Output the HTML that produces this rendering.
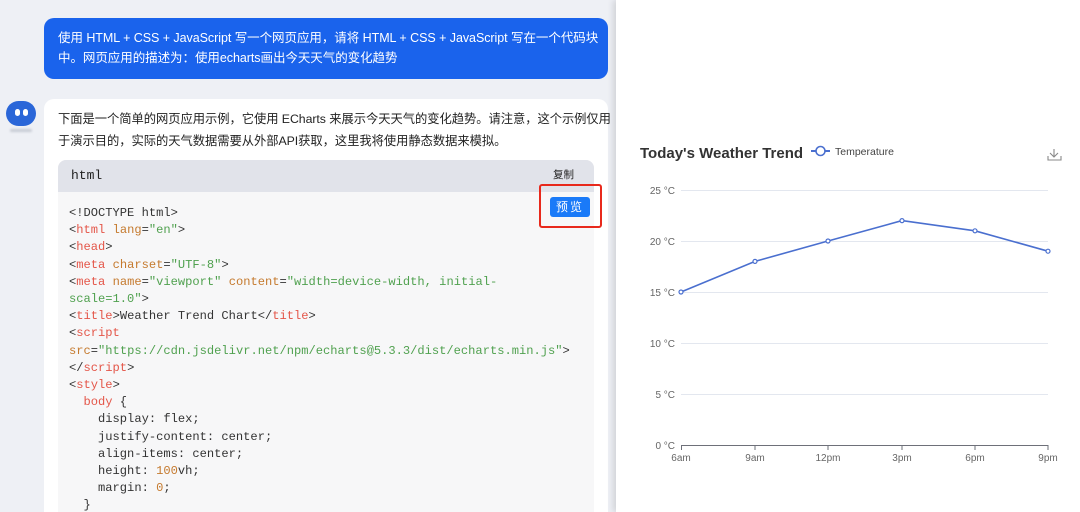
<!DOCTYPE html>
<html style="width:1080px;height:512px;overflow:hidden"><head><meta charset="utf-8"><style>
*{margin:0;padding:0;box-sizing:border-box}
body{width:1080px;height:512px;overflow:hidden;background:#eef0f5;font-family:"Liberation Sans","Noto Sans CJK SC",sans-serif;position:relative}
.q{position:absolute;left:44px;top:18px;width:564px;height:61px;background:#1a63ec;border-radius:10px;color:#fff;font-size:12.5px;line-height:20px;padding:10px 0 10px 14px;letter-spacing:-0.05px}
.av{position:absolute;left:6px;top:101px;width:30px;height:25px;border-radius:13px;background:#2a66d8}
.av i{position:absolute;top:8px;width:5px;height:7px;background:#fff;border-radius:3px}
.sh{position:absolute;left:10px;top:129px;width:22px;height:3px;background:#c8ccd4;border-radius:2px;filter:blur(1px)}
.a{position:absolute;left:44px;top:99px;width:564px;height:413px;background:#fff;border-radius:10px 10px 0 0}
.t{position:absolute;left:58px;top:108px;width:560px;font-size:12.3px;line-height:22px;color:#222;letter-spacing:-0.05px}
.cb{position:absolute;left:58px;top:160px;width:536px;height:352px;background:#f7f7f8;border-radius:8px 8px 0 0;overflow:hidden}
.ch{height:32px;background:#e1e3ea;font-family:"Liberation Mono",monospace;font-size:13px;line-height:32px;padding-left:13px;color:#222}
.cp{position:absolute;right:20px;top:8px;font-size:10.5px;color:#222;font-family:"Liberation Sans","Noto Sans CJK SC",sans-serif;line-height:14px}
pre{position:absolute;left:11px;top:45px;font-family:"Liberation Mono",monospace;font-size:12.1px;line-height:17.2px;color:#333}
.r{color:#e45649}.o{color:#c57a2e}.g{color:#50a14f}
.red{position:absolute;left:539px;top:184px;width:63px;height:44px;border:2px solid #e8291c;border-radius:3px}
.pv{position:absolute;left:550px;top:197px;width:40px;height:20px;background:#1a7af8;border-radius:3px;color:#fff;font-size:12px;text-align:center;line-height:20px;letter-spacing:2px}
.rp{position:absolute;left:616px;top:0;width:464px;height:512px;background:#fff;box-shadow:-3px 0 6px rgba(0,0,0,.12)}
</style></head><body>
<div class="q">使用 HTML + CSS + JavaScript 写一个网页应用，请将 HTML + CSS + JavaScript 写在一个代码块中。网页应用的描述为：使用echarts画出今天天气的变化趋势</div>
<div class="av"><i style="left:9px"></i><i style="left:17px"></i></div><div class="sh"></div>
<div class="a"></div>
<div class="t">下面是一个简单的网页应用示例，它使用 ECharts 来展示今天天气的变化趋势。请注意，这个示例仅用<br>于演示目的，实际的天气数据需要从外部API获取，这里我将使用静态数据来模拟。</div>
<div class="cb"><div class="ch">html</div><div class="cp">复制</div>
<pre>&lt;!DOCTYPE html&gt;
&lt;<span class="r">html</span> <span class="o">lang</span>=<span class="g">"en"</span>&gt;
&lt;<span class="r">head</span>&gt;
&lt;<span class="r">meta</span> <span class="o">charset</span>=<span class="g">"UTF-8"</span>&gt;
&lt;<span class="r">meta</span> <span class="o">name</span>=<span class="g">"viewport"</span> <span class="o">content</span>=<span class="g">"width=device-width, initial-
scale=1.0"</span>&gt;
&lt;<span class="r">title</span>&gt;Weather Trend Chart&lt;/<span class="r">title</span>&gt;
&lt;<span class="r">script</span>
<span class="o">src</span>=<span class="g">"https://cdn.jsdelivr.net/npm/echarts@5.3.3/dist/echarts.min.js"</span>&gt;
&lt;/<span class="r">script</span>&gt;
&lt;<span class="r">style</span>&gt;
  <span class="r">body</span> {
    display: flex;
    justify-content: center;
    align-items: center;
    height: <span class="o">100</span>vh;
    margin: <span class="o">0</span>;
  }</pre></div>
<div class="red"></div><div class="pv">预览</div>
<div class="rp"></div>
<svg style="position:absolute;left:0;top:0" width="1080" height="512" font-family="Liberation Sans,sans-serif">
<text x="640" y="158" font-size="15" font-weight="bold" fill="#333">Today's Weather Trend</text>
<line x1="811" y1="151" x2="830" y2="151" stroke="#4a6fcf" stroke-width="2"/><circle cx="820.5" cy="151" r="4.5" fill="#fff" stroke="#4a6fcf" stroke-width="1.6"/>
<text x="835" y="155" font-size="10.5" fill="#444">Temperature</text>
<g stroke="#888" fill="none" stroke-width="1.1"><path d="M1054 149v8M1050 153l4 4 4-4M1048 156v4h13v-4"/></g>
<g stroke="#e3e7ef" stroke-width="1"><line x1="681" y1="190.5" x2="1048" y2="190.5"/><line x1="681" y1="241.5" x2="1048" y2="241.5"/><line x1="681" y1="292.5" x2="1048" y2="292.5"/><line x1="681" y1="343.5" x2="1048" y2="343.5"/><line x1="681" y1="394.5" x2="1048" y2="394.5"/></g>
<line x1="681" y1="445.5" x2="1048" y2="445.5" stroke="#6e7079"/>
<g stroke="#6e7079"><line x1="681.5" y1="445" x2="681.5" y2="450"/><line x1="755" y1="445" x2="755" y2="450"/><line x1="828" y1="445" x2="828" y2="450"/><line x1="902" y1="445" x2="902" y2="450"/><line x1="975" y1="445" x2="975" y2="450"/><line x1="1048" y1="445" x2="1048" y2="450"/></g>
<g font-size="10" fill="#666" text-anchor="end"><text x="675" y="194">25 °C</text><text x="675" y="245">20 °C</text><text x="675" y="296">15 °C</text><text x="675" y="347">10 °C</text><text x="675" y="398">5 °C</text><text x="675" y="449">0 °C</text></g>
<g font-size="10" fill="#666" text-anchor="middle"><text x="681" y="461">6am</text><text x="755" y="461">9am</text><text x="828" y="461">12pm</text><text x="902" y="461">3pm</text><text x="975" y="461">6pm</text><text x="1048" y="461">9pm</text></g>
<polyline points="681,292 755,261.4 828,241 902,220.6 975,230.8 1048,251.2" fill="none" stroke="#4a6fcf" stroke-width="1.6"/>
<g fill="#fff" stroke="#4a6fcf" stroke-width="1.2"><circle cx="681" cy="292" r="2"/><circle cx="755" cy="261.4" r="2"/><circle cx="828" cy="241" r="2"/><circle cx="902" cy="220.6" r="2"/><circle cx="975" cy="230.8" r="2"/><circle cx="1048" cy="251.2" r="2"/></g>
</svg>
</body></html>
